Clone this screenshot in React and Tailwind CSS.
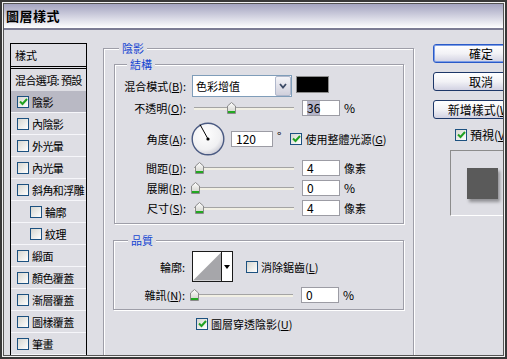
// Photoshop 圖層樣式 (Layer Style) dialog, drop-shadow page.
const bg = 'bg-[#dedee4]';

function Key({ text, k, colon = true }) {
  return (
    <>
      {text}(<span className="underline">{k}</span>){colon ? ':' : ''}
    </>
  );
}

function Check({ checked }) {
  return (
    <span className="flex h-[12px] w-[12px] shrink-0 items-center justify-center border border-[#1c5180] bg-gradient-to-br from-[#d6d6d0] to-white">
      {checked && (
        <svg width="9" height="8" viewBox="0 0 9 8">
          <path d="M1 3.5 L3.5 6 L8 1" fill="none" stroke="#21a121" strokeWidth="2" />
        </svg>
      )}
    </span>
  );
}

function Thumb() {
  return (
    <svg width="9" height="12" viewBox="0 0 9 12">
      <defs>
        <linearGradient id="thumbFill" x1="0" y1="0" x2="0" y2="1">
          <stop offset="0" stopColor="#ffffff" />
          <stop offset="1" stopColor="#cdcdc6" />
        </linearGradient>
      </defs>
      <path d="M0.5 4 L4.5 0.5 L8.5 4 L8.5 11.5 L0.5 11.5 Z" fill="url(#thumbFill)" stroke="#8a8a8a" />
      <rect x="1" y="9" width="7" height="2" fill="#22a822" />
    </svg>
  );
}

function Slider({ pos }) {
  return (
    <div className="relative h-[12px] w-[100px] shrink-0">
      <div className="h-[5px]" />
      <div className="h-[3px] border-t border-[#a4a4a4] bg-[#f2f0e4]" />
      <div className={`absolute top-0 ${pos}`}>
        <Thumb />
      </div>
    </div>
  );
}

function Field({ value, highlight, w = 'w-[38px]' }) {
  return (
    <div className={`flex h-[16px] shrink-0 items-center border border-[#9c9ca4] bg-white pl-[4px] text-[12px] leading-[14px] ${w}`}>
      <span className={highlight ? 'bg-[#b4b4c8]' : ''}>{value}</span>
    </div>
  );
}

function Label({ children }) {
  return <span className="w-[74px] shrink-0 whitespace-nowrap pr-[3px] text-right leading-[14px]">{children}</span>;
}

function Legend({ children, pos }) {
  return (
    <span className={`absolute -top-[8px] ${pos} ${bg} px-[3px] leading-[14px] text-[#1546d2]`}>{children}</span>
  );
}

function SideRow({ label, checked, indent, selected }) {
  return (
    <div
      className={`flex h-[22px] items-center gap-[3px] whitespace-nowrap border-b border-[#f6f6fa] ${indent ? 'pl-[19px]' : 'pl-[6px]'} ${
        selected ? 'bg-[#b9b9c4]' : ''
      }`}
    >
      <Check checked={checked} />
      <span className="leading-[14px] tracking-[-0.6px]">{label}</span>
    </div>
  );
}

function Button({ children, primary }) {
  return (
    <div
      className={`flex h-[19px] w-[96px] items-center justify-center whitespace-nowrap rounded-[3px] border bg-gradient-to-b from-white via-[#f2f2f6] to-[#d2d2e2] text-[12px] leading-[14px] ${
        primary ? 'border-[#2a5ac8] shadow-[inset_0_0_0_1px_#7d9ee6]' : 'border-[#1d3768]'
      }`}
    >
      {children}
    </div>
  );
}

export default function App() {
  const side = [
    ['內陰影'],
    ['外光暈'],
    ['內光暈'],
    ['斜角和浮雕'],
    ['輪廓', true],
    ['紋理', true],
    ['緞面'],
    ['顏色覆蓋'],
    ['漸層覆蓋'],
    ['圖樣覆蓋'],
    ['筆畫']
  ];

  return (
    <div className="h-[359px] w-[507px] border-2 border-[#383838] font-['Noto_Sans_CJK_TC','Noto_Sans',sans-serif] text-[11px] text-black">
      <div className="h-full border border-[#f2f2f2]">
        <div className={`flex h-full flex-col overflow-hidden border border-[#555555] ${bg}`}>
          {/* title bar */}
          <div className="flex h-[26px] shrink-0 items-center border-b-2 border-[#7c7c94] bg-gradient-to-b from-[#a4a4c0] to-white pl-[2px]">
            <span className="text-[13px] font-bold leading-[16px] tracking-[0.5px]">圖層樣式</span>
          </div>

          <div className="flex items-start">
            {/* style list */}
            <div className="ml-[6px] mt-[13px] h-[330px] w-[77px] shrink-0 overflow-hidden border border-black">
              <div className="flex h-[25px] items-center border-b-[3px] border-double border-black pl-[4px] leading-[14px]">樣式</div>
              <div className="flex h-[22px] items-center whitespace-nowrap pl-[4px] leading-[14px] tracking-[-0.6px]">混合選項: 預設</div>
              <SideRow label="陰影" checked selected />
              {side.map(([label, indent]) => (
                <SideRow key={label} label={label} indent={indent} />
              ))}
            </div>

            {/* drop shadow group */}
            <div className="relative ml-[16px] mt-[18px] h-[330px] w-[311px] shrink-0 border border-[#9e9ea8] pl-[10px] pt-[15px] shadow-[1px_1px_0_#fff,inset_1px_1px_0_#fff]">
              <Legend pos="left-[15px]">陰影</Legend>

              {/* structure */}
              <div className="relative h-[160px] w-[290px] border border-[#9e9ea8] pt-[10px] shadow-[1px_1px_0_#fff,inset_1px_1px_0_#fff]">
                <Legend pos="left-[12px]">結構</Legend>

                <div className="flex h-[22px] items-center">
                  <Label>
                    <Key text="混合模式" k="B" />
                  </Label>
                  <div className="ml-[3px] flex h-[22px] w-[100px] items-center border border-[#7f9db9] bg-white">
                    <span className="flex-1 pl-[3px] leading-[14px]">色彩增值</span>
                    <div className="flex h-[20px] w-[16px] items-center justify-center rounded-[2px] border border-[#b0b8cc] bg-gradient-to-b from-[#f4f4f8] to-[#d0d0dc]">
                      <svg width="8" height="6" viewBox="0 0 8 6">
                        <path d="M1 1 L4 4.5 L7 1" fill="none" stroke="#3c4a66" strokeWidth="1.8" />
                      </svg>
                    </div>
                  </div>
                  <div className="mb-[3px] ml-[4px] h-[17px] w-[33px] border border-[#8c8c8c] bg-black" />
                </div>

                <div className="mt-[3px] flex h-[16px] items-center">
                  <Label>
                    <Key text="不透明" k="O" />
                  </Label>
                  <div className="ml-[5px]">
                    <Slider pos="left-[33px]" />
                  </div>
                  <div className="ml-[8px]">
                    <Field value="36" highlight />
                  </div>
                  <span className="ml-[4px] text-[12px] leading-[14px]">%</span>
                </div>

                <div className="mt-[5px] flex h-[35px] items-center">
                  <Label>
                    <Key text="角度" k="A" />
                  </Label>
                  <svg className="ml-[2px] shrink-0" width="34" height="34" viewBox="0 0 34 34">
                    <defs>
                      <radialGradient id="dialFill" cx="0.4" cy="0.35" r="0.7">
                        <stop offset="0" stopColor="#ffffff" />
                        <stop offset="0.7" stopColor="#f0f0f2" />
                        <stop offset="1" stopColor="#c8c8d2" />
                      </radialGradient>
                    </defs>
                    <circle cx="17" cy="17" r="15.8" fill="url(#dialFill)" stroke="#4a5a82" strokeWidth="1.4" />
                    <line x1="17" y1="17" x2="9" y2="2.5" stroke="#000" strokeWidth="1" />
                    <circle cx="17" cy="17" r="1.6" fill="#000" />
                  </svg>
                  <div className="ml-[6px]">
                    <Field value="120" w="w-[42px]" />
                  </div>
                  <span className="mb-[6px] ml-[4px] text-[12px] leading-[14px]">°</span>
                  <div className="ml-[9px] flex items-center gap-[3px] whitespace-nowrap">
                    <Check checked />
                    <span className="leading-[14px]">
                      <Key text="使用整體光源" k="G" colon={false} />
                    </span>
                  </div>
                </div>

                {[
                  ['間距', 'D', '4', '像素', 'left-[1px]'],
                  ['展開', 'R', '0', '%', '-left-[3px]'],
                  ['尺寸', 'S', '4', '像素', 'left-[1px]']
                ].map(([label, k, value, unit, pos]) => (
                  <div key={label} className="mt-[4px] flex h-[16px] items-center">
                    <Label>
                      <Key text={label} k={k} />
                    </Label>
                    <div className="ml-[5px]">
                      <Slider pos={pos} />
                    </div>
                    <div className="ml-[8px]">
                      <Field value={value} />
                    </div>
                    <span className={`ml-[4px] leading-[14px] ${unit === '%' ? 'text-[12px]' : ''}`}>{unit}</span>
                  </div>
                ))}
              </div>

              {/* quality */}
              <div className="relative mt-[16px] h-[70px] w-[291px] -translate-x-[1px] border border-[#9e9ea8] pt-[10px] shadow-[1px_1px_0_#fff,inset_1px_1px_0_#fff]">
                <Legend pos="left-[14px]">品質</Legend>

                <div className="flex h-[31px] items-center">
                  <Label>輪廓:</Label>
                  <div className="ml-[4px] flex h-[31px] w-[41px] border border-[#1a1a1a] bg-white">
                    <svg className="shrink-0 border-r border-[#1a1a1a]" width="29" height="29" viewBox="0 0 29 29">
                      <path d="M0 29 L29 0 L29 29 Z" fill="#a6a6aa" />
                    </svg>
                    <div className="flex flex-1 items-center justify-center">
                      <svg width="6" height="4" viewBox="0 0 6 4">
                        <path d="M0 0 L6 0 L3 4 Z" fill="#000" />
                      </svg>
                    </div>
                  </div>
                  <div className="ml-[13px] flex items-center gap-[3px] whitespace-nowrap">
                    <Check />
                    <span className="leading-[14px]">
                      <Key text="消除鋸齒" k="L" colon={false} />
                    </span>
                  </div>
                </div>

                <div className="mt-[5px] flex h-[16px] items-center">
                  <Label>
                    <Key text="雜訊" k="N" />
                  </Label>
                  <div className="ml-[5px]">
                    <Slider pos="-left-[3px]" />
                  </div>
                  <div className="ml-[8px]">
                    <Field value="0" />
                  </div>
                  <span className="ml-[4px] text-[12px] leading-[14px]">%</span>
                </div>
              </div>

              <div className="ml-[82px] mt-[7px] flex items-center gap-[3px] whitespace-nowrap">
                <Check checked />
                <span className="leading-[14px]">
                  <Key text="圖層穿透陰影" k="U" colon={false} />
                </span>
              </div>
            </div>

            {/* buttons and preview */}
            <div className="ml-[19px] mt-[14px] flex shrink-0 flex-col">
              <Button primary>確定</Button>
              <div className="mt-[9px]">
                <Button>取消</Button>
              </div>
              <div className="mt-[9px]">
                <Button>
                  新增樣式(<span className="underline">W</span>)
                </Button>
              </div>
              <div className="ml-[22px] mt-[9px] flex items-center gap-[3px] whitespace-nowrap text-[12px]">
                <Check checked />
                <span className="leading-[14px]">
                  <Key text="預視" k="V" colon={false} />
                </span>
              </div>
              <div className="ml-[17px] mt-[8px] h-[66px] w-[70px] border border-b-white border-l-[#8c8c8c] border-r-white border-t-[#8c8c8c] pl-[16px] pt-[17px]">
                <div className="h-[31px] w-[31px] bg-[#5a5a5a] shadow-[2px_3px_3px_rgba(0,0,0,0.35)]" />
              </div>
            </div>
          </div>
        </div>
      </div>
    </div>
  );
}
